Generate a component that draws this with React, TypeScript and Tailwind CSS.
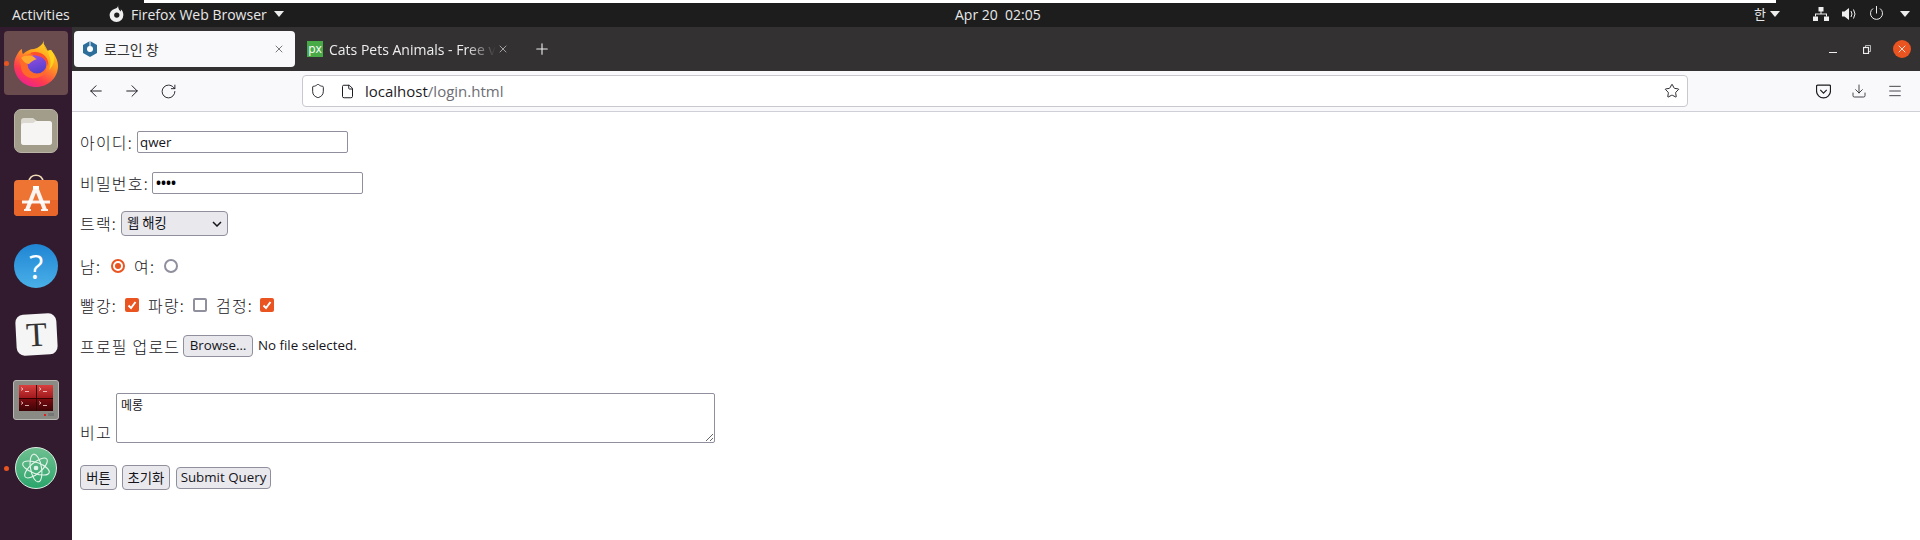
import React from "react";
import { ArrowLeft, ArrowRight, RotateCw, Shield, File, Star, Download, Menu, Plus, X } from "lucide-react";

const ko = { fontFamily: '"Noto Sans CJK KR", sans-serif' };
const ui = { fontFamily: '"Open Sans", "Noto Sans CJK KR", sans-serif' };

function Caret({ className = "" }: { className?: string }) {
  return (
    <svg width="10" height="6" viewBox="0 0 10 6" className={className}>
      <path d="M0 0h10L5 6z" fill="#eee" />
    </svg>
  );
}

function Firefox() {
  return (
    <svg width="44" height="47" viewBox="0 0 44 47">
      <defs>
        <linearGradient id="ffa" x1="0.8" y1="0" x2="0.25" y2="1">
          <stop offset="0" stopColor="#ffe226" />
          <stop offset="0.4" stopColor="#ff9a1f" />
          <stop offset="0.75" stopColor="#ff3a4f" />
          <stop offset="1" stopColor="#ea1f96" />
        </linearGradient>
        <linearGradient id="ffb" x1="0.3" y1="0" x2="0.6" y2="1">
          <stop offset="0" stopColor="#9a4fe0" />
          <stop offset="1" stopColor="#4f3fcc" />
        </linearGradient>
      </defs>
      <path d="M30 0c-1 5 1 8 4 11 1-1 2-1 3-1 5 6 7 11 7 16 0 12-10 21-22 21C10 47 0 37 0 25c0-5 2-9 4-12 1-2 2-3 4-4 0 2 0 4 1 5 3-3 7-5 11-5 4-1 9-4 10-9z" fill="url(#ffa)" />
      <path d="M29 3c3 4 5 8 6 12 2 5 2 10 0 15 4-4 6-9 5-15-1-2-2-4-3-5-1 0-2 0-3 1-3-3-4-5-5-8z" fill="#ffd21f" />
      <path d="M5 20c3-2 7-5 10-6 6-2 13 0 16 5 3 5 2 11-1 15-3 3-8 5-13 4-6-1-10-6-10-12z" fill="#ff6a2a" />
      <circle cx="23" cy="24" r="9.500" fill="url(#ffb)" />
      <path d="M7 18c4-3 9-3 13-1 1 1 2 2 3 2-4 1-6 3-8 5-3 0-6-3-8-6z" fill="#ffa92e" />
      <path d="M16 13c5-2 11-1 15 3 3 3 4 7 3 11-1-6-5-10-10-11-3-1-6-1-8-3z" fill="#ff4f2a" />
    </svg>
  );
}

function TermCell({ dark }: { dark?: boolean }) {
  return (
    <div className={dark ? "bg-gradient-to-b from-[#7a0c10] to-[#3d0406] p-[2px]" : "bg-gradient-to-b from-[#d8403f] to-[#a0181c] p-[2px]"}>
      <svg width="9" height="5" viewBox="0 0 9 5" fill="none" stroke="#f2dada" strokeWidth="0.800">
        <path d="M0 0.500 2 2 0 3.500M4 4.500h4" />
      </svg>
    </div>
  );
}

function Dock() {
  return (
    <aside className="w-[72px] shrink-0 bg-[#321b2f] flex flex-col items-center">
      <div className="relative mt-[4px] w-[64px] h-[64px] rounded-[4px] bg-[#6b4c4e] flex items-center justify-center">
        <span className="absolute left-0 top-[30px] w-[5px] h-[5px] rounded-full bg-[#e95420]" />
        <Firefox />
      </div>
      <div className="mt-[14px] w-[44px] h-[44px] rounded-[7px] bg-[#a29c8a] border border-[#b9b4a5] flex items-center justify-center">
        <svg width="33" height="27" viewBox="0 0 33 27">
          <path d="M1 3a3 3 0 0 1 3-3h9l4 3h12a3 3 0 0 1 3 3v18a3 3 0 0 1-3 3H4a3 3 0 0 1-3-3z" fill="#dcd9d1" />
          <path d="M1 8a3 3 0 0 1 3-3h9l3-2h13a3 3 0 0 1 3 3v18a3 3 0 0 1-3 3H4a3 3 0 0 1-3-3z" fill="#f6f5f3" />
        </svg>
      </div>
      <div className="mt-[21px] w-[44px] h-[44px]">
        <svg width="44" height="44" viewBox="0 0 44 44">
          <path d="M15 8c0-9 14-9 14 0" fill="none" stroke="#f0d9b5" strokeWidth="1.600" />
          <rect x="0" y="6" width="44" height="36" rx="4" fill="#ee7434" />
          <path d="M0 26h44v12a4 4 0 0 1-4 4H4a4 4 0 0 1-4-4z" fill="#e9662a" />
          <path d="M22 13 13 36M22 13l9 23" stroke="#fff" strokeWidth="4" opacity="0.92" fill="none" />
          <path d="M19 12h6v3h-6z" fill="#fff" />
          <path d="M8 28h28" stroke="#fff" strokeWidth="3" opacity="0.92" />
          <path d="M10 36h7M27 36h7" stroke="#fff" strokeWidth="2" opacity="0.9" />
        </svg>
      </div>
      <div className="mt-[26px] w-[44px] h-[44px] rounded-full bg-gradient-to-b from-[#1f85d3] to-[#49b0e8] flex items-center justify-center">
        <span className="text-white text-[33px] leading-none" style={{ fontFamily: '"Open Sans", sans-serif' }}>?</span>
      </div>
      <div className="mt-[26px] w-[41px] h-[41px] rounded-[8px] bg-[#f5f5f5] -rotate-3 flex items-center justify-center">
        <span className="text-[#333] text-[34px] leading-none" style={{ fontFamily: '"Liberation Serif", serif' }}>T</span>
      </div>
      <div className="mt-[25px] w-[46px] h-[40px] rounded-[3px] bg-[#8b8b86] border border-[#b8b8b4] flex flex-col">
        <div className="mx-[5px] mt-[4px] h-[26px] grid grid-cols-2 grid-rows-2 gap-[1px] bg-[#300]">
          <TermCell />
          <TermCell />
          <TermCell dark />
          <TermCell dark />
        </div>
        <div className="flex justify-end mr-[4px] mt-[2px] gap-[2px] items-center">
          <span className="w-[2px] h-[2px] bg-[#e02020]" />
          <span className="w-[6px] h-[3px] bg-[#777]" />
        </div>
      </div>
      <div className="relative mt-[27px] w-[42px] h-[42px] rounded-full bg-gradient-to-b from-[#6dbf90] to-[#27a56c] border border-[#dcefe3] flex items-center justify-center">
        <span className="absolute left-[-12px] top-[18px] w-[5px] h-[5px] rounded-full bg-[#e95420]" />
        <svg width="30" height="30" viewBox="0 0 30 30" fill="none" stroke="#e4f3ea" strokeWidth="1.100">
          <ellipse cx="15" cy="15" rx="14" ry="5.500" transform="rotate(20 15 15)" />
          <ellipse cx="15" cy="15" rx="14" ry="5.500" transform="rotate(80 15 15)" />
          <ellipse cx="15" cy="15" rx="14" ry="5.500" transform="rotate(140 15 15)" />
          <circle cx="15" cy="15" r="1.800" fill="#e4f3ea" />
        </svg>
      </div>
    </aside>
  );
}

function Radio({ checked }: { checked?: boolean }) {
  return checked ? (
    <span className="shrink-0 w-[14px] h-[14px] rounded-full border-2 border-[#e95420] flex items-center justify-center">
      <span className="w-[6px] h-[6px] rounded-full bg-[#e95420]" />
    </span>
  ) : (
    <span className="shrink-0 block w-[14px] h-[14px] rounded-full border-2 border-[#8f8f9d]" />
  );
}

function Check({ checked }: { checked?: boolean }) {
  return checked ? (
    <span className="shrink-0 w-[14px] h-[14px] rounded-[2px] bg-[#e95420] flex items-center justify-center">
      <svg width="10" height="10" viewBox="0 0 10 10" fill="none" stroke="#fff" strokeWidth="2">
        <path d="M1.500 5.500 4 8l4.500-6" />
      </svg>
    </span>
  ) : (
    <span className="shrink-0 block w-[14px] h-[14px] rounded-[2px] border-2 border-[#8f8f9d]" />
  );
}

function Label({ w, children }: { w: string; children: React.ReactNode }) {
  return <span className={`${w} shrink-0 whitespace-nowrap tracking-[1.2px]`}>{children}</span>;
}

export default function App() {
  return (
    <div className="w-[1920px] h-[540px] overflow-hidden flex flex-col bg-white" style={ui}>
      <header className="h-[27px] shrink-0 bg-[#1d1d1d] text-[#e8e8e8] text-[14px] flex items-center pl-[12px] pr-[10px] relative">
        <span className="absolute left-[144px] right-[144px] top-0 h-[3px] bg-white" />
        <span className="w-[97px] mt-[1px]">Activities</span>
        <svg width="16" height="17" viewBox="0 0 14 16" className="mr-[6px]">
          <path d="M8 0c0 2-1 3-3 3.500C2 4.500 0 7 0 9.500A6.500 6.500 0 0 0 13 9.500C13 7 12 5 10.500 4c.5 1 0 2 0 2C9.500 5 8 4 8 0z" fill="#eee" />
          <circle cx="6.800" cy="9.500" r="2.500" fill="#1d1d1d" />
        </svg>
        <span className="w-[137px] whitespace-nowrap mt-[1px]">Firefox Web Browser</span>
        <Caret className="ml-[6px]" />
        <span className="ml-[671px] w-[87px] whitespace-nowrap mt-[1px]">Apr 20&nbsp;&nbsp;02:05</span>
        <span className="ml-auto text-[13px] leading-none" style={ko}>한</span>
        <Caret className="ml-[4px]" />
        <svg width="16" height="14" viewBox="0 0 16 14" className="ml-[33px]" fill="#eee">
          <rect x="5.500" y="0" width="5" height="4.500" />
          <rect x="0" y="9.500" width="5" height="4.500" />
          <rect x="11" y="9.500" width="5" height="4.500" />
          <path d="M7.500 4h1v2.500H14v3h-1v-2H3v2H2v-3h5.500z" />
        </svg>
        <svg width="15" height="14" viewBox="0 0 15 14" className="ml-[13px]" fill="#eee">
          <path d="M0 4.500h2.500L7 1v12L2.500 9.500H0z" />
          <path d="M9 4q2 3 0 6M11.500 2.500q3 4.500 0 9" fill="none" stroke="#eee" />
        </svg>
        <svg width="15" height="15" viewBox="0 0 15 15" className="ml-[12px]" fill="none" stroke="#eee">
          <path d="M4 2.500a6 6 0 1 0 7 0M7.500 0v7.500" />
        </svg>
        <Caret className="ml-[16px]" />
      </header>
      <div className="flex flex-1 min-h-0">
        <Dock />
        <div className="flex-1 flex flex-col min-w-0">
          <div className="h-[44px] shrink-0 bg-[#333132] flex items-center text-[14px]">
            <div className="ml-[2px] w-[221px] h-[36px] rounded-[4px] bg-[#f9f9fb] text-[#333] flex items-center pl-[9px] shrink-0">
              <svg width="14" height="16" viewBox="0 0 14 16">
                <path d="M7 0l7 4v8l-7 4-7-4V4z" fill="#2c6d9c" />
                <circle cx="7" cy="8" r="3" fill="#fff" />
                <path d="M7 0v5" stroke="#fff" />
              </svg>
              <span className="ml-[7px] text-[14px]" style={ko}>로그인 창</span>
              <X size={12} className="ml-auto mr-[10px]" strokeWidth={1.300} />
            </div>
            <div className="flex items-center pl-[12px] text-[#eee] shrink-0">
              <span className="w-[16px] h-[16px] bg-[#48a947] text-white text-[12px] leading-none flex items-center justify-center shrink-0">px</span>
              <span className="ml-[6px] w-[167px] whitespace-nowrap block [mask-image:linear-gradient(to_right,black_82%,transparent)]">Cats Pets Animals - Free v</span>
              <X size={12} className="shrink-0 ml-[1px]" strokeWidth={1.300} color="#ddd" />
            </div>
            <Plus size={18} color="#eee" className="ml-[24px]" strokeWidth={1.500} />
            <span className="ml-auto w-[8px] h-[1px] bg-[#eee] mt-[7px]" />
            <svg width="8" height="9" viewBox="0 0 8 9" fill="none" stroke="#eee" className="ml-[26px]">
              <rect x="0.500" y="2.500" width="5" height="6" strokeWidth="1.200" />
              <path d="M2.500 2V.500h5v6H6" strokeWidth="0.700" />
            </svg>
            <span className="ml-[22px] mr-[9px] w-[18px] h-[18px] rounded-full bg-[#e95420] flex items-center justify-center">
              <X size={12} color="#fff" strokeWidth={1.600} />
            </span>
          </div>
          <div className="h-[41px] shrink-0 bg-[#f9f9fb] border-b border-[#cfcfd8] flex items-center text-[#1c1b22]">
            <ArrowLeft size={18} strokeWidth={1.300} className="ml-[15px]" />
            <ArrowRight size={18} strokeWidth={1.300} className="ml-[18px]" />
            <RotateCw size={17} strokeWidth={1.300} className="ml-[19px]" />
            <div className="ml-[125px] w-[1386px] h-[32px] bg-white rounded-[4px] border border-[#c8c8ce] flex items-center pl-[7px] pr-[7px] shrink-0">
              <Shield size={16} strokeWidth={1.400} />
              <File size={15} strokeWidth={1.600} className="ml-[14px]" />
              <span className="ml-[10px] text-[15px] whitespace-nowrap">localhost<span className="text-[#6d6d73]">/login.html</span></span>
              <Star size={16} strokeWidth={1.400} className="ml-auto" />
            </div>
            <svg width="15" height="15" viewBox="0 0 14 14" fill="none" stroke="#1c1b22" strokeWidth="1.100" className="ml-[128px]">
              <path d="M1.500 1h11A1 1 0 0 1 13.500 2v4.500a6.500 6.500 0 0 1-13 0V2a1 1 0 0 1 1-1z" />
              <path d="M4 5.500 7 8.500l3-3" />
            </svg>
            <Download size={16} strokeWidth={1.200} className="ml-[20px]" />
            <Menu size={16} strokeWidth={1.200} className="ml-[20px]" />
          </div>
          <main className="flex-1 pl-[8px] text-[16px] text-[#15141a] font-light" style={ko}>
            <div className="mt-[19px] h-[22px] flex items-center">
              <Label w="w-[57px]">아이디:</Label>
              <input readOnly defaultValue="qwer" className="w-[211px] h-[22px] border border-[#8f8f9d] rounded-[2px] px-[2px] text-[13.330px] font-normal outline-none" style={ui} />
            </div>
            <div className="mt-[19px] h-[22px] flex items-center">
              <Label w="w-[72px]">비밀번호:</Label>
              <input readOnly type="password" defaultValue="qwer" className="w-[211px] h-[22px] border border-[#8f8f9d] rounded-[2px] px-[3px] text-[13.330px] font-bold text-black outline-none" style={ui} />
            </div>
            <div className="mt-[16px] h-[26px] flex items-center">
              <Label w="w-[41px]">트랙:</Label>
              <div className="relative">
                <select className="appearance-none block w-[107px] h-[25px] border border-[#8f8f9d] rounded-[4px] bg-[#e9e9ed] pl-[5px] text-[13.330px] font-normal outline-none" style={ko}>
                  <option>웹 해킹</option>
                </select>
                <svg width="10" height="6" viewBox="0 0 10 6" fill="none" stroke="#15141a" strokeWidth="1.500" className="absolute right-[6px] top-[10px]">
                  <path d="M1 1l4 4 4-4" />
                </svg>
              </div>
            </div>
            <div className="mt-[20px] h-[20px] flex items-center">
              <Label w="w-[31px]">남:</Label>
              <span className="mr-[9px]"><Radio checked /></span>
              <Label w="w-[30px]">여:</Label>
              <Radio />
            </div>
            <div className="mt-[19px] h-[20px] flex items-center">
              <Label w="w-[45px]">빨강:</Label>
              <span className="mr-[9px]"><Check checked /></span>
              <Label w="w-[45px]">파랑:</Label>
              <span className="mr-[9px]"><Check /></span>
              <Label w="w-[44px]">검정:</Label>
              <Check checked />
            </div>
            <div className="mt-[20px] h-[22px] flex items-center">
              <Label w="w-[103px]">프로필 업로드</Label>
              <button className="w-[70px] h-[22px] border border-[#8f8f9d] rounded-[4px] bg-[#e9e9ed] text-[13.330px] font-normal" style={ui}>Browse…</button>
              <span className="ml-[5px] text-[13.330px] font-normal" style={ui}>No file selected.</span>
            </div>
            <div className="mt-[36px] h-[50px] flex items-end">
              <span className="w-[36px] shrink-0 leading-[22px] tracking-[1.200px]">비고</span>
              <textarea readOnly defaultValue="메롱" className="w-[599px] h-[50px] border border-[#8f8f9d] rounded-[2px] px-[4px] py-[2px] text-[12px] font-normal outline-none" style={ko} />
            </div>
            <div className="mt-[22px] h-[25px] flex items-center text-[13.330px] font-normal">
              <button className="w-[37px] h-[25px] border border-[#8f8f9d] rounded-[4px] bg-[#e9e9ed]">버튼</button>
              <button className="ml-[5px] w-[48px] h-[25px] border border-[#8f8f9d] rounded-[4px] bg-[#e9e9ed]">초기화</button>
              <button className="ml-[6px] w-[95px] h-[22px] border border-[#8f8f9d] rounded-[4px] bg-[#e9e9ed]" style={ui}>Submit Query</button>
            </div>
          </main>
        </div>
      </div>
    </div>
  );
}
